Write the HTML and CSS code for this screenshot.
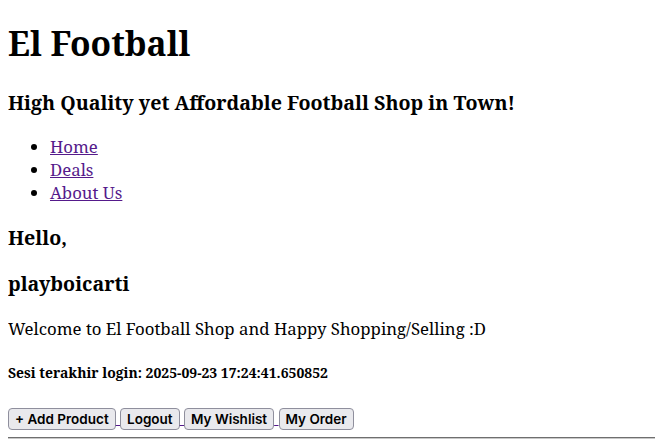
FILE: index.html
```html
<!DOCTYPE html>
<html>
<head>
<meta charset="utf-8">
<title>El Football</title>
<link rel="stylesheet" href="styles.css">
</head>
<body class="page">
<h1 class="title">El Football</h1>
<h3 class="tagline">High Quality yet Affordable Football Shop in Town!</h3>
<ul class="nav">
  <li><a href="#home">Home</a></li>
  <li><a href="#deals">Deals</a></li>
  <li><a href="#about">About Us</a></li>
</ul>
<h3 class="greet">Hello,</h3>
<h3 class="greet">playboicarti</h3>
<p class="welcome">Welcome to El Football Shop and Happy Shopping/Selling :D</p>
<h5 class="session">Sesi terakhir login: 2025-09-23 17:24:41.650852</h5>
<a href="#add" class="btn-link"><button class="btn">+ Add Product</button> </a><a href="#logout" class="btn-link"><button class="btn">Logout</button> </a><a href="#wishlist" class="btn-link"><button class="btn">My Wishlist</button> </a><a href="#order" class="btn-link"><button class="btn">My Order</button></a>
<hr class="rule">
</body>
</html>
```
FILE: styles.css
```css
.page {
  margin: 8px;
  font-family: "Noto Serif", "DejaVu Serif", serif;
  font-size: 16.8px;
  color: #000;
}
.title {
  margin-top: 12px;
}
.nav {
  padding-left: 42px;
}
.nav a, .btn-link { color: #551a8b; }
.btn {
  font-family: "Inter", "Noto Sans", sans-serif;
  font-weight: 600;
  font-size: 13.5px;
  line-height: 17px;
  color: #000;
  background: #e9e9ed;
  border: 1px solid #8f8f9d;
  border-radius: 4px;
  padding: 1.5px 6px;
}
.rule {
  margin-top: 7px;
  border: none;
  border-top: 1px solid #6f6f6f;
  border-bottom: 1px solid #c8c8c8;
  height: 0;
}
```
